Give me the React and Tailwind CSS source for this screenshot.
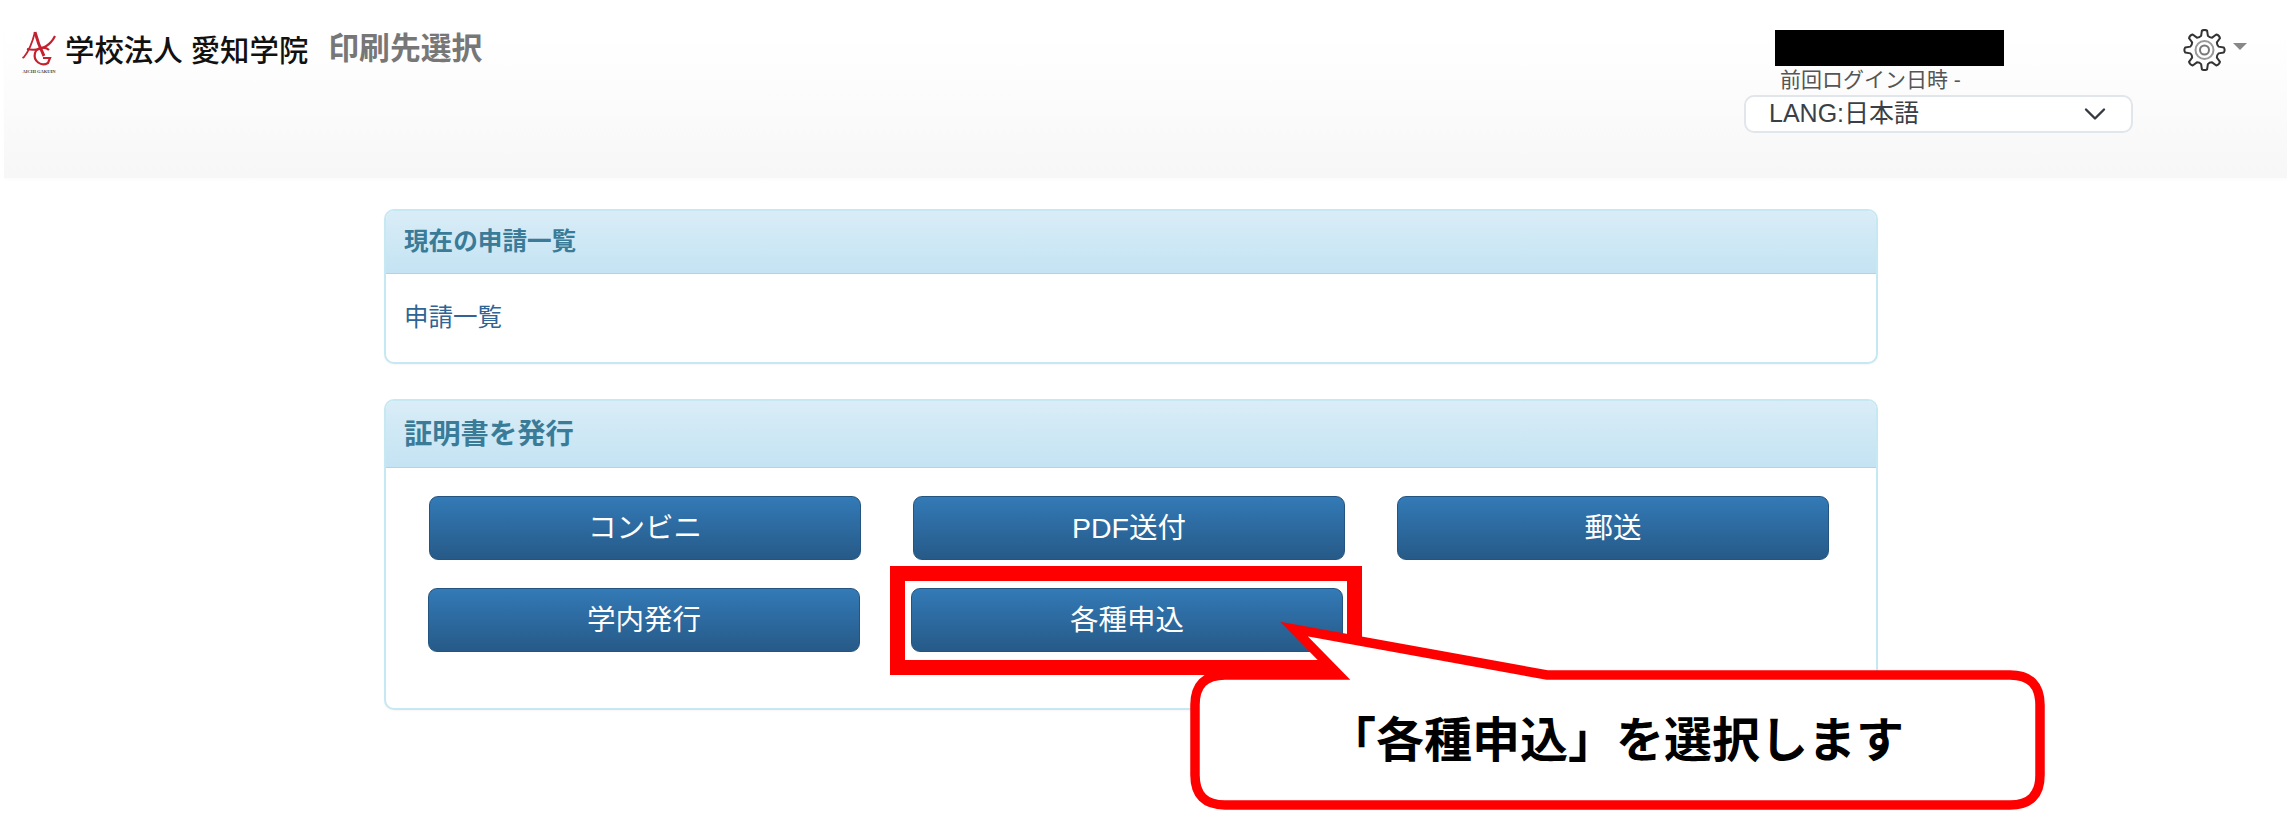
const cjk = "font-['Liberation_Sans','Noto_Sans_CJK_JP',sans-serif]";

function gearPath(cx, cy, rOuter, rInner, teeth) {
  const pts = [];
  const step = (Math.PI * 2) / teeth;
  for (let i = 0; i < teeth; i++) {
    const a = -Math.PI / 2 + i * step;
    const at = (r, o) => `${(cx + r * Math.cos(a + o)).toFixed(2)} ${(cy + r * Math.sin(a + o)).toFixed(2)}`;
    pts.push(`${i === 0 ? "M" : "L"}${at(rInner, -step * 0.3)}`);
    pts.push(`L${at(rOuter, -step * 0.17)}`);
    pts.push(`Q${at(rOuter + 1.4, 0)} ${at(rOuter, step * 0.17)}`);
    pts.push(`L${at(rInner, step * 0.3)}`);
    pts.push(`Q${at(rInner - 1.2, step * 0.5)} ${at(rInner, step * 0.7)}`);
  }
  return pts.join(" ") + "Z";
}

function Logo() {
  return (
    <div className="w-[36px] mt-[31px] flex flex-col items-center">
      <svg width="36" height="38" viewBox="0 0 36 38" fill="none" stroke="#c4202e">
        <path d="M14 1 C12 9 8 20 3 26 L1.500 27" strokeWidth="1.800" />
        <path d="M14 1 C16 9 18 15 23 25" strokeWidth="3" />
        <path d="M6 18 C14 20 24 18 30 11 C32 9 33 7 34 5" strokeWidth="2.200" />
        <path d="M28 19 C24 15 16 16 14 22 C12 30 20 36 27 32 L29 27 L22 27" strokeWidth="2.200" />
      </svg>
      <div className="text-[4.500px] leading-[5px] font-bold whitespace-nowrap text-[#444] font-['Liberation_Serif',serif]">AICHI GAKUIN</div>
    </div>
  );
}

function Panel({ title, titleSize, headerH, children }) {
  return (
    <section className="border-2 border-[#c6e8f2] rounded-[10px] bg-white overflow-hidden shadow-[0_1px_2px_rgba(0,0,0,0.04)]">
      <div className={`${headerH} ${titleSize} px-[18px] flex items-center font-bold text-[#3a7b98] bg-gradient-to-b from-[#d9edf7] to-[#c4e3f3] border-b border-[#c3ced4]`}>
        {title}
      </div>
      {children}
    </section>
  );
}

function Btn({ children }) {
  return (
    <button className="w-[432px] h-[64px] shrink-0 rounded-[9px] border border-[#245580] bg-gradient-to-b from-[#337ab7] to-[#265a88] text-white text-[28.500px] flex items-center justify-center">
      {children}
    </button>
  );
}

export default function App() {
  return (
    <div className={`${cjk} relative w-[2287px] h-[815px] overflow-hidden bg-white`}>
      <header className="ml-1 h-[178px] pl-[17px] pr-[40px] flex items-start bg-gradient-to-b from-[#ffffff] from-20% to-[#f7f7f7] shadow-[0_2px_2px_rgba(0,0,0,0.015)]">
        <Logo />
        <div className="ml-[8px] mt-[32px] text-[29.400px] leading-[38px] text-[#111] whitespace-nowrap font-medium">学校法人 愛知学院</div>
        <h1 className="ml-[20px] mt-[29px] text-[30.800px] leading-[40px] font-bold text-[#777] whitespace-nowrap">印刷先選択</h1>

        <div className="ml-auto w-[389px] pt-[30px]">
          <div className="ml-[31px] w-[229px] h-[36px] bg-black" />
          <div className="ml-[36px] h-[29px] text-[21px] leading-[28px] text-[#555] whitespace-nowrap">前回ログイン日時 -</div>
          <div className="h-[38px] rounded-[10px] border-2 border-[#e1e6ea] bg-white flex items-center pl-[23px] pr-[25px] text-[25px] text-[#3a4046]">
            <span>LANG:日本語</span>
            <svg className="ml-auto" width="22" height="14" viewBox="0 0 22 14" fill="none" stroke="#343a40" strokeWidth="2.400" strokeLinecap="round" strokeLinejoin="round">
              <path d="M2 2.500 L11 11.500 L20 2.500" />
            </svg>
          </div>
        </div>

        <div className="ml-[50px] mt-[29px] flex items-start">
          <svg width="43" height="42" viewBox="0 0 43 42" fill="none">
            <path d={gearPath(21.5, 21, 19.5, 14.5, 8)} stroke="#333" strokeWidth="2" strokeLinejoin="round" />
            <circle cx="21.500" cy="21" r="9" stroke="#999" strokeWidth="2" />
            <circle cx="21.500" cy="21" r="4.500" stroke="#777" strokeWidth="2" />
          </svg>
          <div className="ml-[7px] mt-[14px] w-0 h-0 border-x-[7px] border-x-transparent border-t-[7px] border-t-[#888]" />
        </div>
      </header>

      <main className="ml-[384px] w-[1494px] pt-[31px] flex flex-col gap-[35px]">
        <Panel title="現在の申請一覧" titleSize="text-[24.600px]" headerH="h-[63px]">
          <div className="h-[88px] px-[18px] flex items-center text-[24.500px] text-[#2f6494]">申請一覧</div>
        </Panel>
        <Panel title="証明書を発行" titleSize="text-[28.300px]" headerH="h-[67px]">
          <div className="h-[240px] pt-[28px] flex flex-col gap-[28px]">
            <div className="pl-[43px] flex gap-[52px]">
              <Btn>コンビニ</Btn>
              <Btn>PDF送付</Btn>
              <Btn>郵送</Btn>
            </div>
            <div className="pl-[42px] flex gap-[51px]">
              <Btn>学内発行</Btn>
              <Btn>各種申込</Btn>
            </div>
          </div>
        </Panel>
      </main>

      {/* annotation overlay */}
      <div className="absolute left-[890px] top-[566px] w-[472px] h-[109px] border-[15px] border-[#ff0000]" />
      <svg className="absolute left-0 top-0" width="2287" height="815" viewBox="0 0 2287 815">
        <path
          d="M1225 675 L1339 675 L1294 629 L1547 675 L2010 675 Q2040 675 2040 705 L2040 775 Q2040 805 2010 805 L1225 805 Q1195 805 1195 775 L1195 705 Q1195 675 1225 675 Z"
          fill="#fff"
          stroke="#ff0000"
          strokeWidth="9.500"
          strokeLinejoin="miter"
          strokeMiterlimit="10"
        />
      </svg>
      <div className="absolute left-[1328px] top-[704px] text-[48px] leading-[64px] font-bold text-black whitespace-nowrap font-['Noto_Sans_CJK_JP',sans-serif]">
        「各種申込」を選択します
      </div>
    </div>
  );
}
